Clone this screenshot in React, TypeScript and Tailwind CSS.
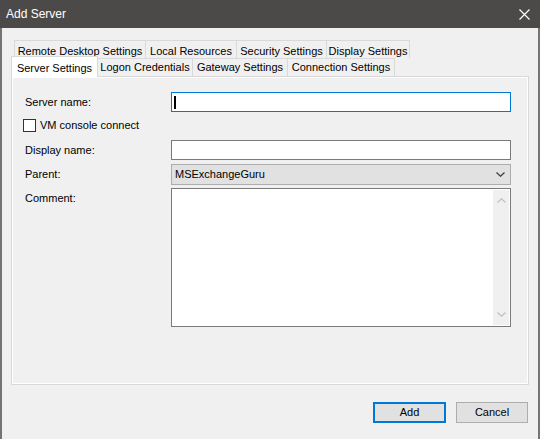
import React from "react";

const backTabs = [
  { label: "Remote Desktop Settings", w: "w-[132px]" },
  { label: "Local Resources", w: "w-[92px]" },
  { label: "Security Settings", w: "w-[91px]" },
  { label: "Display Settings", w: "w-[84px]" },
];

const frontTabs = [
  { label: "Logon Credentials", w: "w-[95px]" },
  { label: "Gateway Settings", w: "w-[95px]" },
  { label: "Connection Settings", w: "w-[107px]" },
];

function Chevron({ up, className }: { up?: boolean; className?: string }) {
  return (
    <svg width="9" height="5" viewBox="0 0 9 5" className={className}>
      <path
        d={up ? "M0.5 4.5 L4.5 0.8 L8.5 4.5" : "M0.5 0.5 L4.5 4.2 L8.5 0.5"}
        fill="none"
        stroke="currentColor"
        strokeWidth="1.3"
      />
    </svg>
  );
}

export default function App() {
  return (
    <div
      className="w-[540px] h-[439px] flex flex-col bg-[#f0f0f0] text-[11px] text-black overflow-hidden"
      style={{ fontFamily: '"Liberation Sans", Arial, sans-serif' }}
    >
      {/* title bar */}
      <div className="h-[28px] shrink-0 bg-[#4b4a48] flex items-center justify-between pl-[6px] pr-[10px]">
        <span className="text-white text-[12px]">Add Server</span>
        <svg width="11" height="11" viewBox="0 0 11 11">
          <path d="M0.5 0.5 L10.5 10.5 M10.5 0.5 L0.5 10.5" stroke="#fff" strokeWidth="1.2" />
        </svg>
      </div>

      <div className="flex-1 flex flex-col border-l-2 border-r-2 border-[#747474] px-[9px]">
        {/* tabs */}
        <div className="pt-[12px] flex flex-col">
          <div className="flex h-[18px] pl-[3px]">
            {backTabs.map((t) => (
              <div
                key={t.label}
                className={`${t.w} border-t border-l border-r border-[#d9d9d9] -ml-px first:ml-0 flex items-start justify-center pt-[2px] whitespace-nowrap`}
              >
                {t.label}
              </div>
            ))}
          </div>
          <div className="flex items-end h-[18px]">
            <div className="w-[87px] h-[21px] -mb-px relative z-10 bg-white border-t border-l border-r border-[#d9d9d9] flex items-start justify-center pt-[3px] whitespace-nowrap">
              Server Settings
            </div>
            {frontTabs.map((t) => (
              <div
                key={t.label}
                className={`${t.w} h-[18px] bg-[#f0f0f0] border-t border-r border-[#d9d9d9] flex items-center justify-center whitespace-nowrap`}
              >
                {t.label}
              </div>
            ))}
          </div>
        </div>

        {/* panel */}
        <div className="h-[309px] border border-[#d9d9d9] shadow-[inset_0_0_0_1px_#ffffff] pt-[15px] pl-[13px]">
          <div className="flex items-center h-[20px]">
            <span className="w-[146px]">Server name:</span>
            <div className="w-[340px] h-[20px] bg-white border border-[#0078d7] flex items-center pl-[2px]">
              <div className="w-[2px] h-[13px] bg-black" />
            </div>
          </div>

          <div className="flex items-center h-[13px] mt-[7px] -ml-[2px]">
            <div className="w-[13px] h-[13px] border border-[#333333] bg-white" />
            <span className="ml-[4px]">VM console connect</span>
          </div>

          <div className="flex items-center h-[20px] mt-[8px]">
            <span className="w-[146px]">Display name:</span>
            <div className="w-[340px] h-[20px] bg-white border border-[#7a7a7a]" />
          </div>

          <div className="flex items-center h-[21px] mt-[4px]">
            <span className="w-[146px]">Parent:</span>
            <div className="w-[340px] h-[21px] bg-[#e1e1e1] border border-[#adadad] flex items-center justify-between pl-[3px] pr-[5px]">
              <span>MSExchangeGuru</span>
              <Chevron className="text-[#404040]" />
            </div>
          </div>

          <div className="flex items-start mt-[3px]">
            <span className="w-[146px] pt-[2px]">Comment:</span>
            <div className="w-[340px] h-[139px] bg-white border border-[#7a7a7a] p-px flex justify-end">
              <div className="w-[16px] h-full bg-[#f0f0f0] flex flex-col items-center justify-between py-[8px]">
                <Chevron up className="text-[#c2c2c2]" />
                <Chevron className="text-[#c2c2c2]" />
              </div>
            </div>
          </div>
        </div>

        {/* buttons */}
        <div className="flex justify-end gap-[10px] pt-[17px] pr-px">
          <button className="w-[73px] h-[21px] bg-[#e1e1e1] border-2 border-[#0078d7] flex items-center justify-center">
            Add
          </button>
          <button className="w-[72px] h-[21px] bg-[#e1e1e1] border border-[#adadad] flex items-center justify-center">
            Cancel
          </button>
        </div>
      </div>
    </div>
  );
}
